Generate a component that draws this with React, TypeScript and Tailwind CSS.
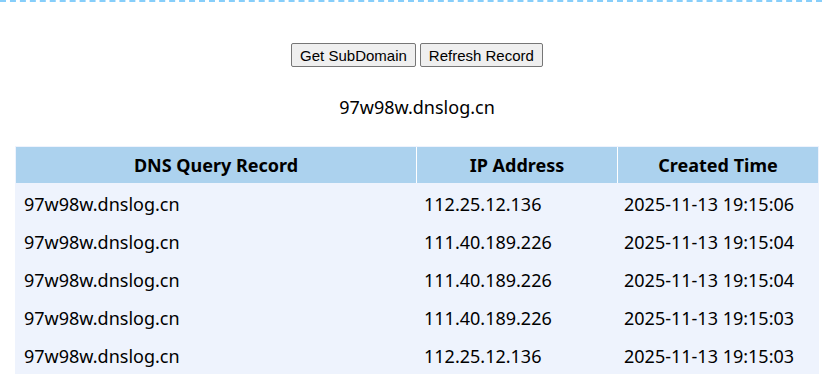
const ROWS = [
  { domain: "97w98w.dnslog.cn", ip: "112.25.12.136", time: "2025-11-13 19:15:06" },
  { domain: "97w98w.dnslog.cn", ip: "111.40.189.226", time: "2025-11-13 19:15:04" },
  { domain: "97w98w.dnslog.cn", ip: "111.40.189.226", time: "2025-11-13 19:15:04" },
  { domain: "97w98w.dnslog.cn", ip: "111.40.189.226", time: "2025-11-13 19:15:03" },
  { domain: "97w98w.dnslog.cn", ip: "112.25.12.136", time: "2025-11-13 19:15:03" },
];

function Btn({ children }: { children: string }) {
  return (
    <button className="h-[24px] px-[8px] bg-[#efefef] border border-[#767676] rounded-[2px] text-[15px] leading-none text-black font-['Liberation_Sans',Arial,sans-serif]">
      {children}
    </button>
  );
}

export default function App() {
  return (
    <div className="w-[822px] h-[383px] bg-white overflow-hidden font-['Noto_Sans',sans-serif] text-black">
      <div className="border-t-2 border-dashed border-[#87cefa]" />
      <div className="w-[834px]">
        <div className="flex justify-center gap-[4px] mt-[41px]">
          <Btn>Get SubDomain</Btn>
          <Btn>Refresh Record</Btn>
        </div>
        <div className="text-center text-[18px] leading-[26px] mt-[27px]">97w98w.dnslog.cn</div>
        <div className="ml-[15px] mt-[26px] w-[804px] border border-[#eef3fd] bg-white">
          <div className="grid grid-cols-[400px_200px_200px] gap-x-px h-[36px] text-[18px] font-bold">
            <div className="bg-[#acd2ee] flex items-center justify-center">DNS Query Record</div>
            <div className="bg-[#acd2ee] flex items-center justify-center">IP Address</div>
            <div className="bg-[#acd2ee] flex items-center justify-center">Created Time</div>
          </div>
          {ROWS.map((r, i) => (
            <div key={i} className="grid grid-cols-[401px_201px_200px] h-[38px] pt-[5px] bg-[#eef3fd] text-[18px] items-center">
              <div className="pl-[8px]">{r.domain}</div>
              <div className="pl-[7px]">{r.ip}</div>
              <div className="pl-[6px]">{r.time}</div>
            </div>
          ))}
        </div>
      </div>
    </div>
  );
}
